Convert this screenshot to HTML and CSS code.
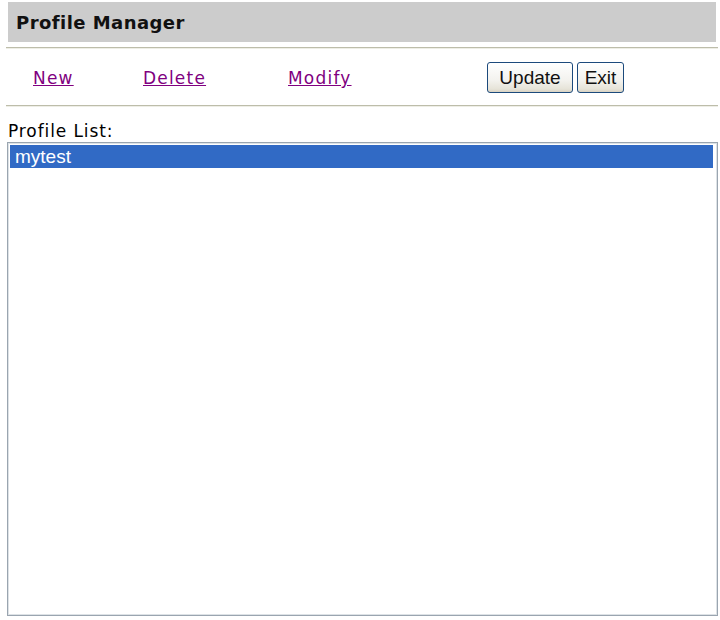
FILE: index.html
```html
<!DOCTYPE html>
<html>
<head>
<meta charset="utf-8">
<title>Profile Manager</title>
<link rel="stylesheet" href="styles.css">
</head>
<body>
<div class="page">
  <div class="header">Profile Manager</div>
  <div class="rule"></div>
  <div class="toolbar">
    <a class="link" href="#">New</a>
    <a class="link" href="#">Delete</a>
    <a class="link" href="#">Modify</a>
    <div class="buttons">
      <button class="btn btn-update" type="button">Update</button>
      <button class="btn btn-exit" type="button">Exit</button>
    </div>
  </div>
  <div class="rule"></div>
  <div class="label">Profile List:</div>
  <div class="listbox">
    <div class="item selected">mytest</div>
  </div>
</div>
</body>
</html>
```
FILE: styles.css
```css
html, body {
  margin: 0;
  padding: 0;
  background: #ffffff;
}
.page {
  padding: 2px 4px 0 8px;
  font-family: "DejaVu Sans", Verdana, sans-serif;
  color: #000;
}
.header {
  width: 708px;
  height: 40px;
  box-sizing: border-box;
  background: #cccccc;
  padding-left: 8px;
  display: flex;
  align-items: center;
  font-weight: bold;
  font-size: 18px;
  letter-spacing: 0.45px;
  color: #111;
}
.rule {
  margin: 5px -2px 0 -2px;
  width: 712px;
  border-top: 1px solid #bdbdaa;
  border-bottom: 1px solid #eeeee6;
}
.toolbar {
  height: 56px;
  display: grid;
  grid-template-columns: 110px 145px 199px auto;
  align-items: center;
  padding-left: 25px;
}
.toolbar + .rule {
  margin-top: 0;
}
.link {
  font-size: 17px;
  letter-spacing: 1.2px;
  color: #800080;
  text-decoration: underline;
  justify-self: start;
  margin-top: 2px;
}
.buttons {
  display: flex;
  gap: 4px;
}
.btn {
  height: 31px;
  box-sizing: border-box;
  padding: 2px 0 0 0;
  font-family: "Liberation Sans", Arial, sans-serif;
  font-size: 19px;
  color: #111;
  border: 1px solid #1c4a7c;
  border-radius: 3px;
  background: linear-gradient(#ffffff 0%, #f3f2ee 60%, #e6e3d8 90%, #d8d2c2 100%);
}
.btn-update {
  width: 86px;
}
.btn-exit {
  width: 47px;
}
.label {
  margin-top: 14px;
  font-size: 17px;
  line-height: 20px;
  letter-spacing: 0.9px;
}
.listbox {
  margin-top: 1px;
  margin-left: -1px;
  width: 711px;
  height: 474px;
  box-sizing: border-box;
  border: 1px solid #9aa5b0;
  box-shadow: inset 0 0 0 1px #dde2e6;
  padding: 2px 4px 2px 2px;
  background: #ffffff;
}
.item {
  height: 23px;
  line-height: 23px;
  padding-left: 5px;
  font-family: "Liberation Sans", Arial, sans-serif;
  font-size: 19px;
}
.item.selected {
  background: #316ac5;
  color: #ffffff;
}
```
